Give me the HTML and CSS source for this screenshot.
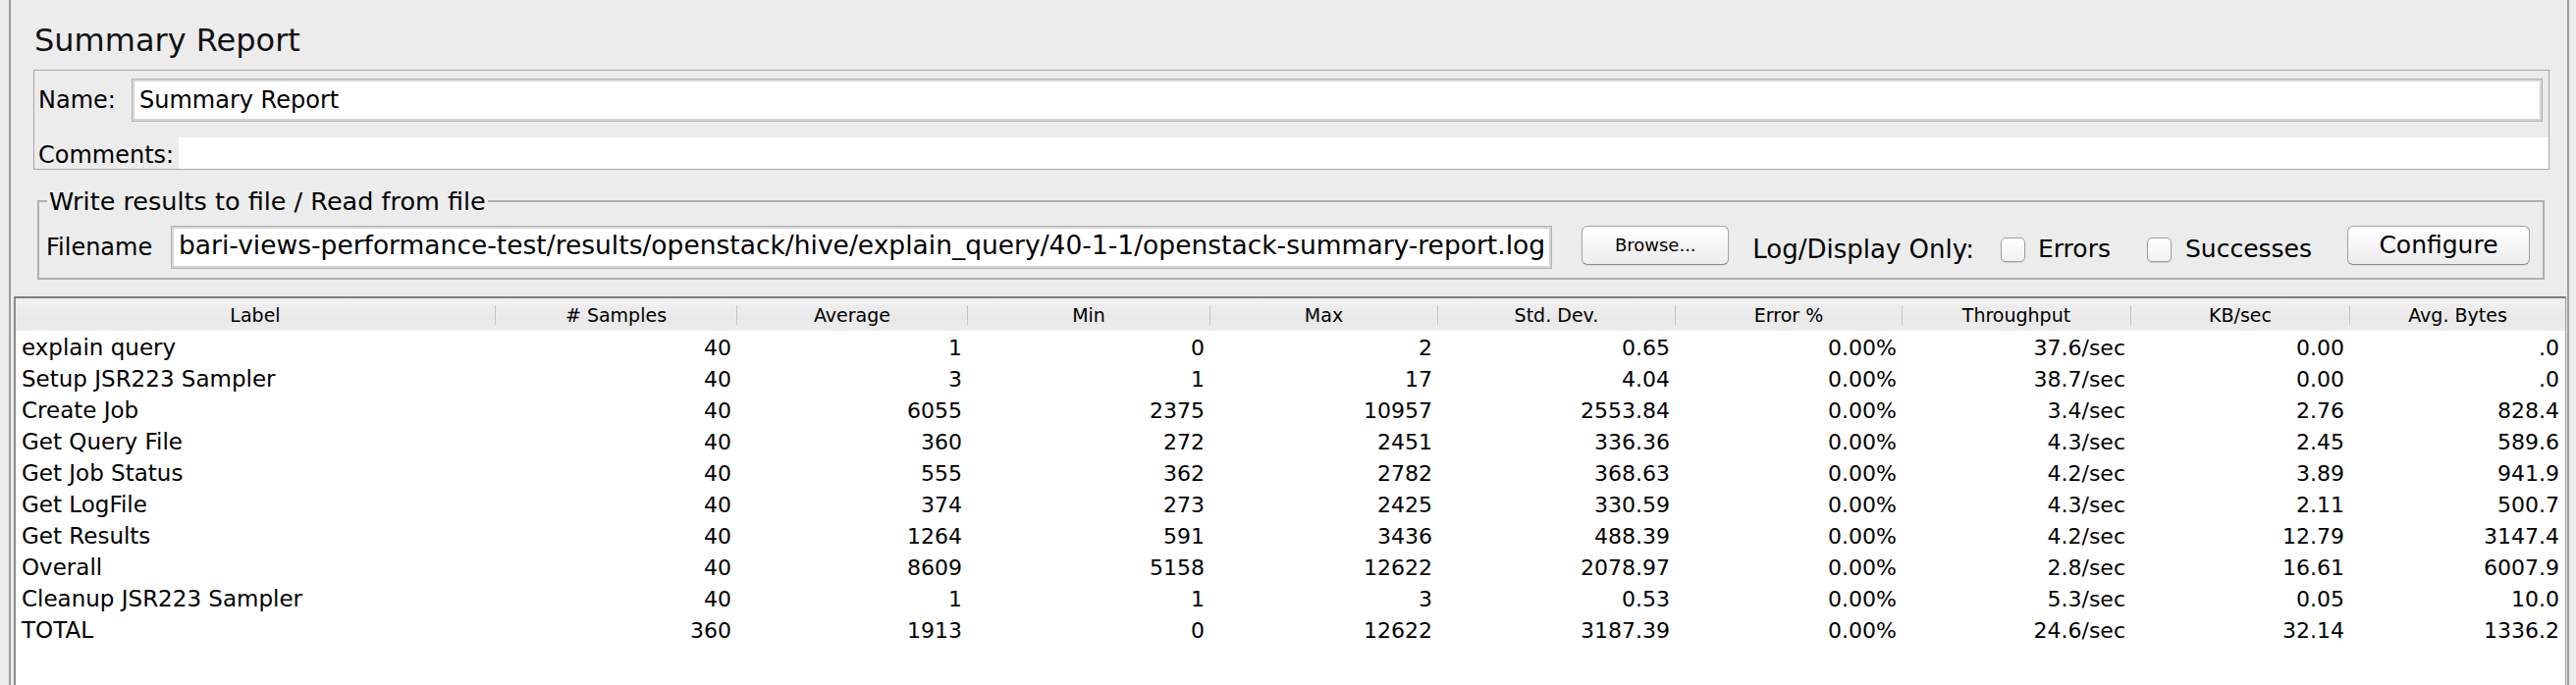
FILE: index.html
```html
<!DOCTYPE html>
<html>
<head>
<meta charset="utf-8">
<title>Summary Report</title>
<link rel="stylesheet" href="styles.css">
</head>
<body>
<div class="frame">
  <div class="title">Summary Report</div>

  <div class="namepanel">
    <div class="name-row">
      <span class="lbl name-lbl">Name:</span>
      <div class="field name-field">Summary Report</div>
    </div>
    <div class="comments-row">
      <span class="lbl comments-lbl">Comments:</span>
      <div class="comments-area"></div>
    </div>
  </div>

  <fieldset class="fileset">
    <legend>Write results to file / Read from file</legend>
    <div class="file-row">
      <span class="lbl file-lbl">Filename</span>
      <div class="field file-field">bari-views-performance-test/results/openstack/hive/explain_query/40-1-1/openstack-summary-report.log</div>
      <button class="btn browse">Browse...</button>
      <span class="lbl logonly">Log/Display Only:</span>
      <span class="cb cb1"></span><span class="lbl cblbl cblbl-err">Errors</span>
      <span class="cb cb2"></span><span class="lbl cblbl cblbl-suc">Successes</span>
      <button class="btn configure">Configure</button>
    </div>
  </fieldset>

  <div class="table">
    <div class="grid thead">
      <div class="th">Label</div>
      <div class="th"># Samples</div>
      <div class="th">Average</div>
      <div class="th">Min</div>
      <div class="th">Max</div>
      <div class="th">Std. Dev.</div>
      <div class="th">Error %</div>
      <div class="th">Throughput</div>
      <div class="th">KB/sec</div>
      <div class="th last">Avg. Bytes</div>
    </div>
    <div class="grid tr"><div class="td lab">explain query</div><div class="td">40</div><div class="td">1</div><div class="td">0</div><div class="td">2</div><div class="td">0.65</div><div class="td">0.00%</div><div class="td">37.6/sec</div><div class="td">0.00</div><div class="td">.0</div></div>
    <div class="grid tr"><div class="td lab">Setup JSR223 Sampler</div><div class="td">40</div><div class="td">3</div><div class="td">1</div><div class="td">17</div><div class="td">4.04</div><div class="td">0.00%</div><div class="td">38.7/sec</div><div class="td">0.00</div><div class="td">.0</div></div>
    <div class="grid tr"><div class="td lab">Create Job</div><div class="td">40</div><div class="td">6055</div><div class="td">2375</div><div class="td">10957</div><div class="td">2553.84</div><div class="td">0.00%</div><div class="td">3.4/sec</div><div class="td">2.76</div><div class="td">828.4</div></div>
    <div class="grid tr"><div class="td lab">Get Query File</div><div class="td">40</div><div class="td">360</div><div class="td">272</div><div class="td">2451</div><div class="td">336.36</div><div class="td">0.00%</div><div class="td">4.3/sec</div><div class="td">2.45</div><div class="td">589.6</div></div>
    <div class="grid tr"><div class="td lab">Get Job Status</div><div class="td">40</div><div class="td">555</div><div class="td">362</div><div class="td">2782</div><div class="td">368.63</div><div class="td">0.00%</div><div class="td">4.2/sec</div><div class="td">3.89</div><div class="td">941.9</div></div>
    <div class="grid tr"><div class="td lab">Get LogFile</div><div class="td">40</div><div class="td">374</div><div class="td">273</div><div class="td">2425</div><div class="td">330.59</div><div class="td">0.00%</div><div class="td">4.3/sec</div><div class="td">2.11</div><div class="td">500.7</div></div>
    <div class="grid tr"><div class="td lab">Get Results</div><div class="td">40</div><div class="td">1264</div><div class="td">591</div><div class="td">3436</div><div class="td">488.39</div><div class="td">0.00%</div><div class="td">4.2/sec</div><div class="td">12.79</div><div class="td">3147.4</div></div>
    <div class="grid tr"><div class="td lab">Overall</div><div class="td">40</div><div class="td">8609</div><div class="td">5158</div><div class="td">12622</div><div class="td">2078.97</div><div class="td">0.00%</div><div class="td">2.8/sec</div><div class="td">16.61</div><div class="td">6007.9</div></div>
    <div class="grid tr"><div class="td lab">Cleanup JSR223 Sampler</div><div class="td">40</div><div class="td">1</div><div class="td">1</div><div class="td">3</div><div class="td">0.53</div><div class="td">0.00%</div><div class="td">5.3/sec</div><div class="td">0.05</div><div class="td">10.0</div></div>
    <div class="grid tr"><div class="td lab">TOTAL</div><div class="td">360</div><div class="td">1913</div><div class="td">0</div><div class="td">12622</div><div class="td">3187.39</div><div class="td">0.00%</div><div class="td">24.6/sec</div><div class="td">32.14</div><div class="td">1336.2</div></div>
  </div>
</div>
</body>
</html>
```
FILE: styles.css
```css
* { box-sizing: border-box; }
html, body {
  margin: 0;
  padding: 0;
  background: #ececec;
  height: 698px;
  overflow: hidden;
}
body {
  font-family: "DejaVu Sans", sans-serif;
  color: #000;
}
.frame {
  margin-left: 9px;
  width: 2608px;
  height: 698px;
  border-left: 2px solid #9c9c9c;
  border-right: 2px solid #9c9c9c;
  display: flex;
  flex-direction: column;
}
.title {
  margin-top: 21px;
  padding-left: 24px;
  font-size: 32px;
  line-height: 40px;
  color: #111;
}

/* Name / Comments panel */
.namepanel {
  margin: 10px 18px 0 23px;
  border: 1px solid #a9a9a9;
  padding: 8px 6px 0 4px;
}
.lbl {
  font-size: 24px;
  line-height: 28px;
  white-space: nowrap;
}
.name-row {
  display: flex;
  align-items: center;
  height: 44px;
}
.name-lbl { width: 95px; flex: none; }
.field {
  background: #fff;
  border: 1px solid #b3b3b3;
  box-shadow: inset 0 0 0 2px #d6d6d6;
  font-size: 24px;
  white-space: nowrap;
  overflow: hidden;
}
.name-field {
  flex: 1;
  height: 44px;
  line-height: 42px;
  padding-left: 7px;
}
.comments-row {
  display: flex;
  align-items: stretch;
  margin: 16px -6px 0 0;
  height: 32px;
}
.comments-lbl {
  width: 143px;
  flex: none;
  line-height: 32px;
  padding-top: 2px;
}
.comments-area {
  flex: 1;
  background: #fff;
}

/* File fieldset */
.fileset {
  margin: 18px 23px 0 27px;
  border: 2px solid #b0b0b0;
  padding: 11px 13px 9px 7px;
  min-width: 0;
}
.fileset legend {
  font-size: 25.5px;
  line-height: 28px;
  padding: 0 2px;
  margin-left: 1px;
}
.file-row {
  display: flex;
  align-items: center;
  height: 44px;
}
.file-lbl { width: 127px; flex: none; }
.file-field {
  flex: 1;
  min-width: 0;
  height: 44px;
  line-height: 38px;
  padding: 0 0 4px 7px;
  font-size: 26.5px;
}
.btn {
  align-self: flex-start;
  height: 40px;
  border: 1px solid #a3a3a3;
  border-bottom-color: #8e8e8e;
  border-radius: 6px;
  background: linear-gradient(to bottom, #ffffff, #f6f6f6 50%, #ececec);
  box-shadow: 0 1px 1px rgba(0,0,0,0.08);
  font-family: "DejaVu Sans", sans-serif;
  color: #000;
  padding: 0;
  flex: none;
}
.browse {
  margin-left: 30px;
  width: 150px;
  font-size: 18px;
  line-height: 36px;
}
.configure {
  margin-left: 36px;
  width: 186px;
  font-size: 25px;
  line-height: 36px;
}
.logonly {
  margin-left: 24px;
  margin-top: 4px;
  font-size: 26px;
}
.cb {
  flex: none;
  width: 25px;
  height: 25px;
  margin-top: 4px;
  border: 1px solid #9e9e9e;
  border-radius: 5px;
  background: linear-gradient(to bottom, #ffffff, #f1f1f1);
  box-shadow: 0 1px 1px rgba(0,0,0,0.12);
}
.cb1 { margin-left: 27px; }
.cb2 { margin-left: 37px; }
.cblbl { font-size: 25px; margin-top: 4px; }
.cblbl-err { margin-left: 13px; }
.cblbl-suc { margin-left: 14px; }

/* Table */
.table {
  flex: 1;
  margin: 17px 1px 0 3px;
  border-left: 2px solid #8a8a8a;
  border-right: 1px solid #9a9a9a;
  border-top: 2px solid #7c7c7c;
  background: #fff;
}
.grid {
  display: grid;
  grid-template-columns: 489px 246px 235px 247px 232px 242px 231px 233px 223px 1fr;
}
.thead {
  height: 33px;
  background: linear-gradient(to bottom, #f1f1f1, #e9e9e9 60%, #ececec);
}
.th {
  margin: 7px 0 6px;
  height: 20px;
  line-height: 20px;
  font-size: 19px;
  text-align: center;
  border-right: 1px solid #c4c4c4;
  white-space: nowrap;
}
.th.last { border-right: none; }
.tr { height: 32px; }
.td {
  font-size: 22px;
  height: 32px;
  line-height: 29px;
  padding: 3px 6px 0;
  text-align: right;
  white-space: nowrap;
}
.td.lab { text-align: left; font-size: 23px; }
```
